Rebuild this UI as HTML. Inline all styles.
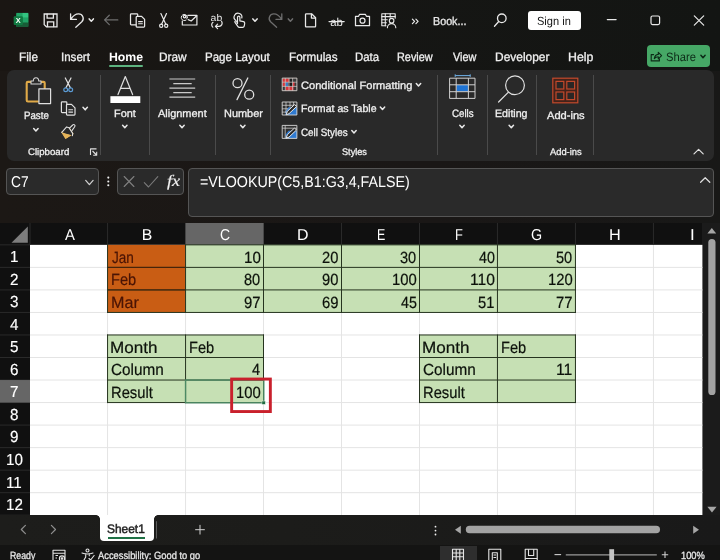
<!DOCTYPE html>
<html lang="en"><head><meta charset="utf-8"><title>Book1 - Excel</title>
<style>
html,body{margin:0;padding:0}
body{width:720px;height:560px;overflow:hidden;background:#151515;font-family:'Liberation Sans',sans-serif;position:relative}
#app{position:absolute;left:0;top:0;width:720px;height:560px;overflow:hidden;will-change:transform}
#app section{display:contents}
#app div{position:absolute;box-sizing:border-box}
#app span{position:absolute;white-space:pre;line-height:1;transform-origin:0 0;display:block;text-rendering:geometricPrecision}
#app svg{position:absolute;left:0;top:0;width:720px;height:560px;overflow:visible;text-rendering:geometricPrecision}
</style></head>
<body>
<div id="app">
<section class="titlebar">
<div style="left:0px;top:0px;width:720px;height:70.5px;background:#131513;background:linear-gradient(90deg,#1a1613 0%,#161614 45%,#131513 100%);"></div>
<div style="left:527.8px;top:11px;width:53.0px;height:18.8px;background:#fff;border-radius:3px;"></div>
<span style="left:433.14px;top:17px;font-size:11.5px;color:#e8e8e8;-webkit-text-stroke:0.3px;transform:scaleX(0.9346);">Book...</span>
<span style="left:537.25px;top:16px;font-size:11.8px;color:#111;transform:scaleX(0.9368);">Sign in</span>
</section>
<section class="ribbon-tabs">
<div style="left:109.3px;top:65.2px;width:33.7px;height:2.0px;background:#5db37f;border-radius:1px;"></div>
<div style="left:647px;top:45px;width:63px;height:22px;background:#46a866;border-radius:4px;"></div>
<span style="left:18.56px;top:51px;font-size:12.1px;color:#f0f0f0;-webkit-text-stroke:0.3px;transform:scaleX(0.9707);">File</span>
<span style="left:61.26px;top:51px;font-size:12.1px;color:#f0f0f0;-webkit-text-stroke:0.3px;transform:scaleX(0.9539);">Insert</span>
<span style="left:108.84px;top:51px;font-size:12.1px;color:#fff;font-weight:700;transform:scaleX(1.0153);">Home</span>
<span style="left:159.25px;top:51px;font-size:12.1px;color:#f0f0f0;-webkit-text-stroke:0.3px;transform:scaleX(0.9800);">Draw</span>
<span style="left:204.78px;top:51px;font-size:12.1px;color:#f0f0f0;-webkit-text-stroke:0.3px;transform:scaleX(0.9535);">Page Layout</span>
<span style="left:288.77px;top:51px;font-size:12.1px;color:#f0f0f0;-webkit-text-stroke:0.3px;transform:scaleX(0.9652);">Formulas</span>
<span style="left:355.09px;top:51px;font-size:12.1px;color:#f0f0f0;-webkit-text-stroke:0.3px;transform:scaleX(0.9445);">Data</span>
<span style="left:397.33px;top:51px;font-size:12.1px;color:#f0f0f0;-webkit-text-stroke:0.3px;transform:scaleX(0.8988);">Review</span>
<span style="left:452.59px;top:51px;font-size:12.1px;color:#f0f0f0;-webkit-text-stroke:0.3px;transform:scaleX(0.8998);">View</span>
<span style="left:495.24px;top:51px;font-size:12.1px;color:#f0f0f0;-webkit-text-stroke:0.3px;transform:scaleX(0.9877);">Developer</span>
<span style="left:567.71px;top:51px;font-size:12.1px;color:#f0f0f0;-webkit-text-stroke:0.3px;transform:scaleX(1.0191);">Help</span>
<span style="left:665.64px;top:51px;font-size:12.1px;color:#0c2a17;transform:scaleX(0.9261);">Share</span>
</section>
<section class="ribbon">
<div style="left:0px;top:70.5px;width:720px;height:152.5px;background:#1a1716;background:linear-gradient(90deg,#1c1815 0%,#1a1716 60%,#181817 100%);"></div>
<div style="left:6.6px;top:70.3px;width:707.2px;height:90.5px;background:#292929;border-radius:7px;"></div>
<div style="left:100.2px;top:74.5px;width:1.0px;height:80.5px;background:#4a4a4a;"></div>
<div style="left:148.5px;top:74.5px;width:1.0px;height:80.5px;background:#4a4a4a;"></div>
<div style="left:215.0px;top:74.5px;width:1.0px;height:80.5px;background:#4a4a4a;"></div>
<div style="left:270.0px;top:74.5px;width:1.0px;height:80.5px;background:#4a4a4a;"></div>
<div style="left:437.0px;top:74.5px;width:1.0px;height:80.5px;background:#4a4a4a;"></div>
<div style="left:487.0px;top:74.5px;width:1.0px;height:80.5px;background:#4a4a4a;"></div>
<div style="left:536.0px;top:74.5px;width:1.0px;height:80.5px;background:#4a4a4a;"></div>
<div style="left:593.0px;top:74.5px;width:1.0px;height:80.5px;background:#4a4a4a;"></div>
<span style="left:23.82px;top:111px;font-size:10.7px;color:#f0f0f0;-webkit-text-stroke:0.3px;transform:scaleX(0.9077);">Paste</span>
<span style="left:114.43px;top:109px;font-size:10.7px;color:#f0f0f0;-webkit-text-stroke:0.3px;transform:scaleX(1.0178);">Font</span>
<span style="left:158.30px;top:109px;font-size:10.7px;color:#f0f0f0;-webkit-text-stroke:0.3px;transform:scaleX(1.0251);">Alignment</span>
<span style="left:223.72px;top:109px;font-size:10.7px;color:#f0f0f0;-webkit-text-stroke:0.3px;transform:scaleX(1.0237);">Number</span>
<span style="left:451.71px;top:109px;font-size:10.7px;color:#f0f0f0;-webkit-text-stroke:0.3px;transform:scaleX(0.9084);">Cells</span>
<span style="left:495.15px;top:109px;font-size:10.7px;color:#f0f0f0;-webkit-text-stroke:0.3px;transform:scaleX(0.9956);">Editing</span>
<span style="left:546.70px;top:111px;font-size:10.7px;color:#f0f0f0;-webkit-text-stroke:0.3px;transform:scaleX(1.0378);">Add-ins</span>
<span style="left:300.75px;top:81px;font-size:10.7px;color:#f0f0f0;-webkit-text-stroke:0.3px;transform:scaleX(1.0360);">Conditional Formatting</span>
<span style="left:301.15px;top:104px;font-size:10.7px;color:#f0f0f0;-webkit-text-stroke:0.3px;transform:scaleX(0.9891);">Format as Table</span>
<span style="left:300.81px;top:128px;font-size:10.7px;color:#f0f0f0;-webkit-text-stroke:0.3px;transform:scaleX(0.9225);">Cell Styles</span>
<span style="left:27.62px;top:148px;font-size:9.6px;color:#f0f0f0;-webkit-text-stroke:0.3px;transform:scaleX(1.0042);">Clipboard</span>
<span style="left:341.54px;top:148px;font-size:9.6px;color:#f0f0f0;-webkit-text-stroke:0.3px;transform:scaleX(0.9549);">Styles</span>
<span style="left:549.70px;top:148px;font-size:9.6px;color:#f0f0f0;-webkit-text-stroke:0.3px;transform:scaleX(0.9733);">Add-ins</span>
</section>
<section class="formula-bar">
<div style="left:6.2px;top:168px;width:92.6px;height:26.5px;background:#2a2a2a;border:1px solid #555;border-radius:4px;"></div>
<div style="left:117px;top:168px;width:67px;height:26.5px;background:#2a2a2a;border:1px solid #555;border-radius:4px;"></div>
<div style="left:188.4px;top:168px;width:525.4px;height:48.6px;background:#2a2a2a;border:1px solid #555;border-radius:4px;"></div>
<span style="left:10.61px;top:175px;font-size:15.6px;color:#fff;transform:scaleX(0.8801);">C7</span>
<span style="left:199.89px;top:175px;font-size:15.6px;color:#fff;transform:scaleX(0.9147);">=VLOOKUP(C5,B1:G3,4,FALSE)</span>
<span style="left:166.62px;top:174px;font-size:16px;color:#f2f2f2;font-style:italic;font-family:'Liberation Serif',serif;-webkit-text-stroke:0.15px;transform:scaleX(1.1429);">fx</span>
</section>
<section class="grid">
<div style="left:0px;top:223px;width:720px;height:292.3px;background:#101010;"></div>
<div style="left:702.4px;top:223px;width:17.6px;height:292.3px;background:#1b1b1b;"></div>
<svg class="cells" viewBox="0 0 720 560" width="720" height="560" aria-hidden="true">
<rect x="30.00" y="244.85" width="672.40" height="270.45" fill="#fff"/>
<rect x="107.05" y="244.85" width="1.00" height="270.45" fill="#e4e4e4"/>
<rect x="185.05" y="244.85" width="1.00" height="270.45" fill="#e4e4e4"/>
<rect x="263.00" y="244.85" width="1.00" height="270.45" fill="#e4e4e4"/>
<rect x="341.00" y="244.85" width="1.00" height="270.45" fill="#e4e4e4"/>
<rect x="419.00" y="244.85" width="1.00" height="270.45" fill="#e4e4e4"/>
<rect x="496.95" y="244.85" width="1.00" height="270.45" fill="#e4e4e4"/>
<rect x="574.95" y="244.85" width="1.00" height="270.45" fill="#e4e4e4"/>
<rect x="652.95" y="244.85" width="1.00" height="270.45" fill="#e4e4e4"/>
<rect x="30.00" y="266.88" width="672.40" height="1.00" fill="#e4e4e4"/>
<rect x="30.00" y="289.41" width="672.40" height="1.00" fill="#e4e4e4"/>
<rect x="30.00" y="311.94" width="672.40" height="1.00" fill="#e4e4e4"/>
<rect x="30.00" y="334.47" width="672.40" height="1.00" fill="#e4e4e4"/>
<rect x="30.00" y="357.00" width="672.40" height="1.00" fill="#e4e4e4"/>
<rect x="30.00" y="379.53" width="672.40" height="1.00" fill="#e4e4e4"/>
<rect x="30.00" y="402.06" width="672.40" height="1.00" fill="#e4e4e4"/>
<rect x="30.00" y="424.59" width="672.40" height="1.00" fill="#e4e4e4"/>
<rect x="30.00" y="447.12" width="672.40" height="1.00" fill="#e4e4e4"/>
<rect x="30.00" y="469.65" width="672.40" height="1.00" fill="#e4e4e4"/>
<rect x="30.00" y="492.18" width="672.40" height="1.00" fill="#e4e4e4"/>
<rect x="29.50" y="223.00" width="1.00" height="21.85" fill="#2a2a2a"/>
<rect x="107.05" y="223.00" width="1.00" height="21.85" fill="#2a2a2a"/>
<rect x="185.05" y="223.00" width="1.00" height="21.85" fill="#2a2a2a"/>
<rect x="263.00" y="223.00" width="1.00" height="21.85" fill="#2a2a2a"/>
<rect x="341.00" y="223.00" width="1.00" height="21.85" fill="#2a2a2a"/>
<rect x="419.00" y="223.00" width="1.00" height="21.85" fill="#2a2a2a"/>
<rect x="496.95" y="223.00" width="1.00" height="21.85" fill="#2a2a2a"/>
<rect x="574.95" y="223.00" width="1.00" height="21.85" fill="#2a2a2a"/>
<rect x="652.95" y="223.00" width="1.00" height="21.85" fill="#2a2a2a"/>
<rect x="0.00" y="244.35" width="30.00" height="1.00" fill="#2a2a2a"/>
<rect x="0.00" y="266.88" width="30.00" height="1.00" fill="#2a2a2a"/>
<rect x="0.00" y="289.41" width="30.00" height="1.00" fill="#2a2a2a"/>
<rect x="0.00" y="311.94" width="30.00" height="1.00" fill="#2a2a2a"/>
<rect x="0.00" y="334.47" width="30.00" height="1.00" fill="#2a2a2a"/>
<rect x="0.00" y="357.00" width="30.00" height="1.00" fill="#2a2a2a"/>
<rect x="0.00" y="379.53" width="30.00" height="1.00" fill="#2a2a2a"/>
<rect x="0.00" y="402.06" width="30.00" height="1.00" fill="#2a2a2a"/>
<rect x="0.00" y="424.59" width="30.00" height="1.00" fill="#2a2a2a"/>
<rect x="0.00" y="447.12" width="30.00" height="1.00" fill="#2a2a2a"/>
<rect x="0.00" y="469.65" width="30.00" height="1.00" fill="#2a2a2a"/>
<rect x="0.00" y="492.18" width="30.00" height="1.00" fill="#2a2a2a"/>
<rect x="0.00" y="514.71" width="30.00" height="1.00" fill="#2a2a2a"/>
<rect x="185.55" y="223.00" width="77.95" height="21.85" fill="#666"/>
<rect x="0.00" y="380.03" width="30.00" height="22.53" fill="#666"/>
<rect x="107.55" y="244.85" width="78.00" height="67.59" fill="#c95d14"/>
<rect x="185.55" y="244.85" width="389.90" height="67.59" fill="#c6e0b4"/>
<rect x="107.55" y="334.97" width="155.95" height="67.59" fill="#c6e0b4"/>
<rect x="419.50" y="334.97" width="155.95" height="67.59" fill="#c6e0b4"/>
<rect x="107.05" y="266.88" width="468.90" height="1.00" fill="#26341f"/>
<rect x="107.05" y="289.41" width="468.90" height="1.00" fill="#26341f"/>
<rect x="107.05" y="311.94" width="468.90" height="1.00" fill="#26341f"/>
<rect x="185.05" y="244.35" width="390.90" height="1.00" fill="#26341f"/>
<rect x="108.05" y="266.88" width="77.00" height="1.00" fill="#4a2208"/>
<rect x="108.05" y="289.41" width="77.00" height="1.00" fill="#4a2208"/>
<rect x="107.05" y="244.35" width="1.00" height="68.59" fill="#26341f"/>
<rect x="185.05" y="244.35" width="1.00" height="68.59" fill="#26341f"/>
<rect x="263.00" y="244.35" width="1.00" height="68.59" fill="#26341f"/>
<rect x="341.00" y="244.35" width="1.00" height="68.59" fill="#26341f"/>
<rect x="419.00" y="244.35" width="1.00" height="68.59" fill="#26341f"/>
<rect x="496.95" y="244.35" width="1.00" height="68.59" fill="#26341f"/>
<rect x="574.95" y="244.35" width="1.00" height="68.59" fill="#26341f"/>
<rect x="107.05" y="334.47" width="156.95" height="1.00" fill="#26341f"/>
<rect x="419.00" y="334.47" width="156.95" height="1.00" fill="#26341f"/>
<rect x="107.05" y="357.00" width="156.95" height="1.00" fill="#26341f"/>
<rect x="419.00" y="357.00" width="156.95" height="1.00" fill="#26341f"/>
<rect x="107.05" y="379.53" width="156.95" height="1.00" fill="#26341f"/>
<rect x="419.00" y="379.53" width="156.95" height="1.00" fill="#26341f"/>
<rect x="107.05" y="402.06" width="156.95" height="1.00" fill="#26341f"/>
<rect x="419.00" y="402.06" width="156.95" height="1.00" fill="#26341f"/>
<rect x="107.05" y="334.47" width="1.00" height="68.59" fill="#26341f"/>
<rect x="185.05" y="334.47" width="1.00" height="68.59" fill="#26341f"/>
<rect x="263.00" y="334.47" width="1.00" height="68.59" fill="#26341f"/>
<rect x="419.00" y="334.47" width="1.00" height="68.59" fill="#26341f"/>
<rect x="496.95" y="334.47" width="1.00" height="68.59" fill="#26341f"/>
<rect x="574.95" y="334.47" width="1.00" height="68.59" fill="#26341f"/>
<rect x="185.55" y="380.03" width="78.25" height="22.73" fill="none" stroke="#4d8a64" stroke-width="1.400"/>
<rect x="261.90" y="401.06" width="3.400" height="3.300" fill="#1f6b41" stroke="#e8f1e4" stroke-width=".5"/>
<rect x="231.650" y="379.050" width="38.700" height="32.500" fill="none" stroke="#c9202c" stroke-width="2.900"/>
</svg>
<span style="left:64.60px;top:228px;font-size:15.8px;color:#fff;transform:scaleX(0.9398);">A</span>
<span style="left:141.83px;top:228px;font-size:15.8px;color:#fff;">B</span>
<span style="left:220.10px;top:228px;font-size:15.8px;color:#fff;transform:scaleX(0.8841);">C</span>
<span style="left:297.03px;top:228px;font-size:15.8px;color:#fff;transform:scaleX(1.0084);">D</span>
<span style="left:376.51px;top:228px;font-size:15.8px;color:#fff;transform:scaleX(0.7853);">E</span>
<span style="left:454.57px;top:228px;font-size:15.8px;color:#fff;transform:scaleX(0.8137);">F</span>
<span style="left:530.98px;top:228px;font-size:15.8px;color:#fff;transform:scaleX(0.9056);">G</span>
<span style="left:608.90px;top:228px;font-size:15.8px;color:#fff;transform:scaleX(1.0285);">H</span>
<span style="left:689.87px;top:228px;font-size:15.8px;color:#fff;transform:scaleX(1.0759);">I</span>
<span style="left:10.12px;top:250px;font-size:16px;color:#fff;-webkit-text-stroke:0.15px;transform:scaleX(0.9500);">1</span>
<span style="left:10.34px;top:273px;font-size:16px;color:#fff;-webkit-text-stroke:0.15px;transform:scaleX(0.9500);">2</span>
<span style="left:10.42px;top:295px;font-size:16px;color:#fff;-webkit-text-stroke:0.15px;transform:scaleX(0.9500);">3</span>
<span style="left:10.42px;top:318px;font-size:16px;color:#fff;-webkit-text-stroke:0.15px;transform:scaleX(0.9500);">4</span>
<span style="left:10.42px;top:340px;font-size:16px;color:#fff;-webkit-text-stroke:0.15px;transform:scaleX(0.9500);">5</span>
<span style="left:10.34px;top:363px;font-size:16px;color:#fff;-webkit-text-stroke:0.15px;transform:scaleX(0.9500);">6</span>
<span style="left:10.34px;top:385px;font-size:16px;color:#fff;-webkit-text-stroke:0.15px;transform:scaleX(0.9500);">7</span>
<span style="left:10.42px;top:408px;font-size:16px;color:#fff;-webkit-text-stroke:0.15px;transform:scaleX(0.9500);">8</span>
<span style="left:10.34px;top:430px;font-size:16px;color:#fff;-webkit-text-stroke:0.15px;transform:scaleX(0.9500);">9</span>
<span style="left:5.86px;top:453px;font-size:16px;color:#fff;-webkit-text-stroke:0.15px;transform:scaleX(0.9500);">10</span>
<span style="left:6.47px;top:476px;font-size:16px;color:#fff;-webkit-text-stroke:0.15px;transform:scaleX(0.9500);">11</span>
<span style="left:5.94px;top:498px;font-size:16px;color:#fff;-webkit-text-stroke:0.15px;transform:scaleX(0.9500);">12</span>
<span style="left:111.58px;top:250px;font-size:16.2px;color:#4a1405;-webkit-text-stroke:0.2px;transform:scaleX(0.8392);">Jan</span>
<span style="left:110.68px;top:272px;font-size:16.2px;color:#4a1405;-webkit-text-stroke:0.2px;transform:scaleX(0.9028);">Feb</span>
<span style="left:110.56px;top:295px;font-size:16.2px;color:#4a1405;-webkit-text-stroke:0.2px;transform:scaleX(0.9960);">Mar</span>
<span style="left:243.79px;top:250px;font-size:16.2px;color:#0d120b;-webkit-text-stroke:0.2px;transform:scaleX(0.9353);">10</span>
<span style="left:322.26px;top:250px;font-size:16.2px;color:#0d120b;-webkit-text-stroke:0.2px;transform:scaleX(0.9078);">20</span>
<span style="left:400.42px;top:250px;font-size:16.2px;color:#0d120b;-webkit-text-stroke:0.2px;transform:scaleX(0.8990);">30</span>
<span style="left:478.66px;top:250px;font-size:16.2px;color:#0d120b;-webkit-text-stroke:0.2px;transform:scaleX(0.8818);">40</span>
<span style="left:556.37px;top:250px;font-size:16.2px;color:#0d120b;-webkit-text-stroke:0.2px;transform:scaleX(0.8990);">50</span>
<span style="left:244.42px;top:272px;font-size:16.2px;color:#0d120b;-webkit-text-stroke:0.2px;transform:scaleX(0.8990);">80</span>
<span style="left:322.26px;top:272px;font-size:16.2px;color:#0d120b;-webkit-text-stroke:0.2px;transform:scaleX(0.9078);">90</span>
<span style="left:391.81px;top:272px;font-size:16.2px;color:#0d120b;-webkit-text-stroke:0.2px;transform:scaleX(0.9160);">100</span>
<span style="left:469.70px;top:272px;font-size:16.2px;color:#0d120b;-webkit-text-stroke:0.2px;transform:scaleX(0.9658);">110</span>
<span style="left:547.76px;top:272px;font-size:16.2px;color:#0d120b;-webkit-text-stroke:0.2px;transform:scaleX(0.9160);">120</span>
<span style="left:244.26px;top:295px;font-size:16.2px;color:#0d120b;-webkit-text-stroke:0.2px;transform:scaleX(0.9168);">97</span>
<span style="left:322.26px;top:295px;font-size:16.2px;color:#0d120b;-webkit-text-stroke:0.2px;transform:scaleX(0.9168);">69</span>
<span style="left:400.71px;top:295px;font-size:16.2px;color:#0d120b;-webkit-text-stroke:0.2px;transform:scaleX(0.8818);">45</span>
<span style="left:478.36px;top:295px;font-size:16.2px;color:#0d120b;-webkit-text-stroke:0.2px;transform:scaleX(0.9078);">51</span>
<span style="left:556.21px;top:295px;font-size:16.2px;color:#0d120b;-webkit-text-stroke:0.2px;transform:scaleX(0.9168);">77</span>
<span style="left:110.48px;top:340px;font-size:16.2px;color:#0d120b;-webkit-text-stroke:0.2px;transform:scaleX(1.0562);">Month</span>
<span style="left:111.08px;top:362px;font-size:16.2px;color:#0d120b;-webkit-text-stroke:0.2px;transform:scaleX(0.9472);">Column</span>
<span style="left:110.67px;top:385px;font-size:16.2px;color:#0d120b;-webkit-text-stroke:0.2px;transform:scaleX(0.9113);">Result</span>
<span style="left:188.68px;top:340px;font-size:16.2px;color:#0d120b;-webkit-text-stroke:0.2px;transform:scaleX(0.9028);">Feb</span>
<span style="left:252.31px;top:362px;font-size:16.2px;color:#0d120b;-webkit-text-stroke:0.2px;transform:scaleX(0.8957);">4</span>
<span style="left:235.81px;top:385px;font-size:16.2px;color:#0d120b;-webkit-text-stroke:0.2px;transform:scaleX(0.9160);">100</span>
<span style="left:422.43px;top:340px;font-size:16.2px;color:#0d120b;-webkit-text-stroke:0.2px;transform:scaleX(1.0562);">Month</span>
<span style="left:423.03px;top:362px;font-size:16.2px;color:#0d120b;-webkit-text-stroke:0.2px;transform:scaleX(0.9472);">Column</span>
<span style="left:422.62px;top:385px;font-size:16.2px;color:#0d120b;-webkit-text-stroke:0.2px;transform:scaleX(0.9113);">Result</span>
<span style="left:500.58px;top:340px;font-size:16.2px;color:#0d120b;-webkit-text-stroke:0.2px;transform:scaleX(0.9028);">Feb</span>
<span style="left:556.28px;top:362px;font-size:16.2px;color:#0d120b;-webkit-text-stroke:0.2px;transform:scaleX(0.9768);">11</span>
</section>
<section class="sheet-tabs">
<div style="left:0px;top:515.3px;width:720px;height:30.1px;background:#1c1c1a;background:linear-gradient(90deg,#1d1d1b 0%,#1c1c1a 40%,#191919 100%);"></div>
<div style="left:0px;top:544.5px;width:720px;height:1.0px;background:#262625;"></div>
<div style="left:100px;top:515.3px;width:53.5px;height:25.5px;background:#fff;border-radius:0 0 4px 4px;"></div>
<div style="left:96px;top:515.3px;width:4px;height:4.0px;background:transparent;background:radial-gradient(circle at 0 100%,#1c1c1a 3.5px,#fff 4.2px);"></div>
<div style="left:153.5px;top:515.3px;width:4.0px;height:4.0px;background:transparent;background:radial-gradient(circle at 100% 100%,#1c1c1a 3.5px,#fff 4.2px);"></div>
<div style="left:107.8px;top:537px;width:37.0px;height:1.6px;background:#1f7145;"></div>
<span style="left:107.40px;top:523px;font-size:12.3px;color:#1e1e1e;-webkit-text-stroke:0.45px;transform:scaleX(0.9693);">Sheet1</span>
</section>
<section class="status-bar">
<div style="left:0px;top:545.4px;width:720px;height:14.6px;background:#141413;"></div>
<div style="left:440px;top:545.5px;width:36.7px;height:14.5px;background:#2e2e2e;"></div>
<span style="left:10.00px;top:551px;font-size:10.5px;color:#e8e8e8;-webkit-text-stroke:0.3px;transform:scaleX(0.8338);">Ready</span>
<span style="left:98.20px;top:551px;font-size:10.5px;color:#e8e8e8;-webkit-text-stroke:0.3px;transform:scaleX(0.8887);">Accessibility: Good to go</span>
<span style="left:680.76px;top:551px;font-size:10.5px;color:#e8e8e8;-webkit-text-stroke:0.3px;transform:scaleX(0.8860);">100%</span>
</section>
<svg class="icons" viewBox="0 0 720 560" width="720" height="560" fill="none" stroke-linecap="round" stroke-linejoin="round" aria-hidden="true">
<g stroke="none"><rect x="16.400" y="12.900" width="11.900" height="14.200" rx="1.200" fill="#1e9e60"/><rect x="22.300" y="12.900" width="6" height="4.800" fill="#33c481"/><rect x="16.400" y="12.900" width="5.900" height="4.800" fill="#21a366"/><rect x="16.400" y="17.700" width="5.900" height="4.700" fill="#107c41"/><rect x="22.300" y="17.700" width="6" height="4.700" fill="#21a366"/><rect x="16.400" y="22.400" width="11.900" height="4.700" rx="1.200" fill="#185c37"/><rect x="13.700" y="16.200" width="9.200" height="8.900" rx="1" fill="#117a42"/><text x="18.300" y="23.300" font-family="Liberation Sans,sans-serif" font-size="7.400" font-weight="700" fill="#fff" text-anchor="middle">X</text></g>
<g stroke="#e9e9e9" stroke-width="1.300" stroke-linejoin="miter"><path d="M44.200 14h12.800v12.800h-10.600l-2.200-2.200z"/><path d="M47.100 14.200v3.900h6.300v-3.900"/><path d="M47.500 26.600v-4.700h6.200v4.700"/></g>
<path d="M70.6 13.8v5.6h5.8M70.9 19.2c2.2-3.6 5-5.4 7.6-5.4a4.6 4.6 0 0 1 3.3 7.9l-6 5.5" stroke="#e9e9e9" stroke-width="1.3"/>
<path d="M89.19 18.90L91.30 21.30L93.41 18.90" stroke="#e9e9e9" stroke-width="1.4949999999999999"/>
<path d="M104.6 19.9h13.2M109.3 15.3l-4.7 4.6 4.7 4.7" stroke="#6e6e6e" stroke-width="1.3"/>
<g stroke="#e9e9e9" stroke-width="1.25"><path d="M135.8 24.8h-4.5a.8.8 0 0 1-.8-.8v-9.4a.8.8 0 0 1 .8-.8h5.6a.8.8 0 0 1 .8.8v1.6"/><path d="M136.2 17.2a.8.8 0 0 1 .8-.8h4.6l3 3v6.8a.8.8 0 0 1-.8.8h-6.8a.8.8 0 0 1-.8-.8z"/><path d="M138.6 21.6h3.8M138.6 23.8h3.8" stroke-width="1.1"/></g>
<g stroke="#e9e9e9" stroke-width="1.2"><path d="M160.9 13.6l4.9 10.6M166.5 13.6l-4.9 10.6"/><circle cx="161.2" cy="25.7" r="1.6"/><circle cx="166.2" cy="25.7" r="1.6"/></g>
<g stroke="#e9e9e9" stroke-width="1.2"><path d="M187.8 15.3h9.1v9.7h-14.6v-4"/><path d="M188.2 19.6l3 1.4 5.5-5.2"/><circle cx="184.6" cy="16.6" r="1.3"/><path d="M185.9 15.4v2.2a1 1 0 0 0 1.5.5 3.1 3.1 0 1 0-1.3 2" stroke-width="1"/></g>
<g fill="#e9e9e9" stroke="none"><text x="210.6" y="20.6" font-family="Liberation Sans,sans-serif" font-size="9.6" textLength="11.6" lengthAdjust="spacingAndGlyphs">ab</text></g><g stroke="#e9e9e9" stroke-width="1.2"><path d="M213 22.3a3 3 0 0 0-.2 4.8M221.6 21.4a3.2 3.2 0 0 1-2.5 5h-3.4M217.6 24.2l-2.2 2.2 2.2 2.2"/></g>
<g stroke="#e9e9e9" stroke-width="1.2"><path d="M235.6 20.2a3.9 3.9 0 1 1 6.2-2.2"/><path d="M237.5 23.6v-6.3a1.2 1.2 0 0 1 2.4 0v3.6l3.6.8a1.6 1.6 0 0 1 1.2 1.8l-.5 2.6a1.6 1.6 0 0 1-1.6 1.3h-3.3a1.6 1.6 0 0 1-1.3-.7l-3-4.300a1 1 0 0 1 1.500-1.300z"/></g>
<path d="M252.89 18.90L255.00 21.30L257.11 18.90" stroke="#e9e9e9" stroke-width="1.4949999999999999"/>
<path d="M281.8 13.8v5.600h-5.800M281.5 19.200c-2.200-3.600-5-5.400-7.600-5.400a4.600 4.600 0 0 0-3.300 7.900l6 5.500" stroke="#6e6e6e" stroke-width="1.3"/>
<path d="M288.29 18.90L290.40 21.30L292.51 18.90" stroke="#6e6e6e" stroke-width="1.4949999999999999"/>
<g stroke="#e9e9e9" stroke-width="1.25"><path d="M305.5 14.6a.8.8 0 0 1 .8-.8h5.300l4 4v8.400a.8.8 0 0 1-.8.800h-8.500a.8.8 0 0 1-.8-.800z"/><path d="M311.400 14v4h4"/></g>
<g fill="#e9e9e9" stroke="none"><text x="330.300" y="25.600" font-family="Liberation Sans,sans-serif" font-size="11.5" textLength="12.600" lengthAdjust="spacingAndGlyphs">ab</text></g><path d="M329 21.6h15.200" stroke="#e9e9e9" stroke-width="1.1"/>
<g stroke="#e9e9e9" stroke-width="1.25"><path d="M355.500 16.300h3l1.200-2h5.600l1.200 2h3v9.400h-14z"/><circle cx="362.500" cy="20.700" r="2.500"/></g>
<g stroke="#e9e9e9" stroke-width="1.1"><path d="M386 25.800h-4.200v-12h13.400v4.500"/><path d="M381.800 16.600h13.400M381.800 19.700h5.500M381.800 22.800h4.600M385.300 13.800v12M390.200 13.800v3.500"/><circle cx="391.600" cy="20.700" r="2.300"/><path d="M387.400 27.800a4.200 4.200 0 0 1 8.400 0"/></g>
<path d="M412.400 19.200l2.200 2.200-2.200 2.200M415.900 19.200l2.200 2.200-2.200 2.200" stroke="#e9e9e9" stroke-width="1.2"/>
<g stroke="#e9e9e9" stroke-width="1.3"><circle cx="501.800" cy="18.300" r="4.300"/><path d="M498.700 21.500l-4.200 4.700"/></g>
<path d="M607.300 19.600h8.800" stroke="#e9e9e9" stroke-width="1.200"/>
<rect x="651" y="16" width="8.600" height="8.600" rx="1.500" stroke="#e9e9e9" stroke-width="1.200"/>
<path d="M694.300 15.800l9.400 9.400M703.700 15.800l-9.400 9.400" stroke="#e9e9e9" stroke-width="1.200"/>
<g stroke-width="2.100" stroke="#e0aa48"><path d="M31 81.900h-3.100a1.200 1.200 0 0 0-1.200 1.200v17.200a1.200 1.200 0 0 0 1.200 1.200h10M40.600 81.900h2.900a1.200 1.200 0 0 1 1.200 1.200v5.200"/></g><path d="M31 84v-3h2.300a2.700 3.300 0 0 1 5.400 0h2.300v3z" stroke="#d4d4d4" stroke-width="1.100" fill="#292929"/><rect x="38.900" y="88.900" width="11.700" height="14.700" stroke="#e0e0e0" stroke-width="1.200" fill="#292929"/>
<path d="M33.70 128.55L35.90 131.05L38.10 128.55" stroke="#e9e9e9" stroke-width="1.4949999999999999"/>
<g stroke-width="1.200"><path d="M65.300 78l5 9.600M71 78l-5 9.600" stroke="#e0e0e0"/><circle cx="65.700" cy="89.700" r="1.900" stroke="#5b9bd5"/><circle cx="70.700" cy="89.700" r="1.900" stroke="#5b9bd5"/></g>
<g stroke="#e0e0e0" stroke-width="1.200"><path d="M66 112.600h-3.800a.8.800 0 0 1-.8-.8v-9.200a.8.800 0 0 1 .8-.8h3.800a.8.800 0 0 1 .8.800v2"/><path d="M66.500 105.200a.8.800 0 0 1 .8-.8h4.200l3.500 3.500v6.400a.8.800 0 0 1-.8.800h-6.900a.8.800 0 0 1-.8-.8z"/><path d="M68.800 109.800h3.800M68.800 112.100h3.800" stroke-width="1.100"/></g>
<path d="M83.00 107.35L85.20 109.85L87.40 107.35" stroke="#e9e9e9" stroke-width="1.4949999999999999"/>
<g stroke-width="1.100"><path d="M61.800 132.300l7.200-4.600 4 6.100-7.300 4.600z" fill="#e5b45a" stroke="#e5b45a"/><path d="M61.800 132.300l4.800-5.400 2.400.8 3.700 5.700-.3 2.400" stroke="#e0e0e0" fill="#292929"/><path d="M69.500 128.200l3.200-3.200a1.300 1.300 0 0 1 2 1.700l-2.600 3.700" stroke="#e0e0e0"/><path d="M63 133.600l8.200 1.500-5.500 3.300z" fill="#e5b45a" stroke="none"/></g>
<g stroke="#e0e0e0" stroke-width="1.100" stroke-linecap="butt"><path d="M96.500 148.900h-6v6M92.500 151l4 4M96.700 151.700v3.500h-3.500"/></g>
<path d="M118 94.600l7.300-18 7.300 18M120.800 88.300h9" stroke="#e0e0e0" stroke-width="1.200"/>
<rect x="110.400" y="96.200" width="29.900" height="6.800" fill="#fff" stroke="none"/>
<path d="M122.60 125.25L124.80 127.75L127.00 125.25" stroke="#e9e9e9" stroke-width="1.4949999999999999"/>
<g stroke="#c9c9c9" stroke-width="1.200" stroke-linecap="butt"><path d="M169.400 79h25.800M173.300 83.600h18.400M169.400 88.100h25.800M173.300 92.600h18.400M169.400 97.100h25.800"/></g>
<path d="M179.80 125.25L182.00 127.75L184.20 125.25" stroke="#e9e9e9" stroke-width="1.4949999999999999"/>
<g stroke="#e0e0e0" stroke-width="1.300"><circle cx="237.500" cy="83.200" r="4.500"/><circle cx="249.200" cy="94.700" r="4.500"/><path d="M247.800 78l-10.800 21.600"/></g>
<path d="M240.60 125.25L242.80 127.75L245.00 125.25" stroke="#e9e9e9" stroke-width="1.4949999999999999"/>
<g stroke="none"><rect x="282" y="78" width="15" height="12.700" fill="#3a3a3a"/><rect x="282.500" y="78.500" width="7" height="3.500" fill="#d8363a"/><rect x="285.500" y="86.500" width="8" height="4" fill="#d8363a"/><rect x="292.500" y="82" width="2" height="4.300" fill="#d8363a"/><rect x="285.500" y="82.300" width="2.500" height="4" fill="#3b78c4"/><rect x="282.500" y="82.300" width="2.500" height="4" fill="#d8363a"/><rect x="289.500" y="78.500" width="3" height="3.500" fill="#222"/><rect x="289" y="82.300" width="3.400" height="4" fill="#1a1a1a"/></g><g stroke="#d6d0cc" stroke-width=".9" stroke-linecap="butt"><rect x="282.200" y="78.100" width="14.700" height="12.600"/><path d="M282.200 82.200h14.700M282.200 86.400h14.700M285.300 78.100v12.600M289 78.100v12.600M292.600 78.100v12.600" stroke-opacity=".75"/></g>
<g stroke="none"><rect x="282" y="101.8" width="15" height="13.300" fill="#303030"/><path d="M288.500 107.3h8.500v7.800h-11.500v-3.800z" fill="#2f7ad0"/></g><g stroke="#d6d6d6" stroke-width=".9" stroke-linecap="butt"><rect x="282.200" y="102.0" width="14.700" height="13"/><path d="M282.200 105.3h14.700M282.200 108.8h6M282.200 112.1h4M286 102.0v11M290 102.0v5.500M293.600 102.0v3.400" stroke-opacity=".8"/></g><path d="M286.300 114.39999999999999l1-3 7.200-6.800 2 2-7.200 6.800z" stroke="#e8e8e8" stroke-width="1" fill="#2a2a2a"/>
<g stroke="none"><rect x="282" y="125.2" width="15" height="13.300" fill="#303030"/><path d="M288.500 130.7h8.500v7.800h-11.500v-3.800z" fill="#2f7ad0"/></g><g stroke="#d6d6d6" stroke-width=".9" stroke-linecap="butt"><rect x="282.200" y="125.4" width="14.700" height="13"/><path d="M282.200 128.2h14.700M285.200 125.4v13" stroke-opacity=".8"/></g><path d="M286.300 137.8l1-3 7.200-6.800 2 2-7.200 6.800z" stroke="#e8e8e8" stroke-width="1" fill="#2a2a2a"/>
<path d="M416.30 83.55L418.50 86.05L420.70 83.55" stroke="#e9e9e9" stroke-width="1.4949999999999999"/>
<path d="M380.30 106.95L382.50 109.45L384.70 106.95" stroke="#e9e9e9" stroke-width="1.4949999999999999"/>
<path d="M351.80 130.55L354.00 133.05L356.20 130.55" stroke="#e9e9e9" stroke-width="1.4949999999999999"/>
<g stroke="none"><rect x="456.400" y="85" width="11.800" height="6.500" fill="#1f74d4"/></g><g stroke="#d0d0d0" stroke-width="1" stroke-linecap="butt"><rect x="449.600" y="78.200" width="25.400" height="20.200"/><path d="M449.600 84.800h25.400M449.600 91.700h25.400M456.200 78.200v20.200M468.400 78.200v20.200"/></g><path d="M455.200 75.600h15M455.200 74.300v2.600M470.200 74.300v2.600" stroke="#6fb0e6" stroke-width="1" stroke-linecap="butt"/>
<path d="M459.80 125.25L462.00 127.75L464.20 125.25" stroke="#e9e9e9" stroke-width="1.4949999999999999"/>
<g stroke="#e0e0e0" stroke-width="1.200"><circle cx="515" cy="85.300" r="9.400"/><path d="M508.200 92.300l-9.600 9.700"/></g>
<path d="M509.10 125.25L511.30 127.75L513.50 125.25" stroke="#e9e9e9" stroke-width="1.4949999999999999"/>
<g stroke="#c2492c" stroke-width="1.200" stroke-linecap="butt" stroke-linejoin="miter"><rect x="552.800" y="78.200" width="25" height="24.600" fill="#43221a"/><g fill="#2a2625"><rect x="556" y="81.400" width="7.800" height="7.600"/><rect x="566.800" y="81.400" width="7.800" height="7.600"/><rect x="556" y="92" width="7.800" height="7.600"/><rect x="566.800" y="92" width="7.800" height="7.600"/></g></g>
<path d="M694.00 153.85L698.60 149.35L703.20 153.85" stroke="#e0e0e0" stroke-width="1.2"/>
<g stroke="#0c2a17" stroke-width="1.100"><path d="M653.600 54.600h-2.400v6.300h8.200v-2"/><path d="M654.300 58.600c.4-2.600 1.900-4 4-4.200v-2.100l3.300 3.300-3.300 3.300v-2.100c-1.800 0-3 .5-4 1.800z"/></g>
<path d="M700.89 55.25L703.00 57.75L705.11 55.25" stroke="#0c2a17" stroke-width="1.4949999999999999"/>
<path d="M85.70 180.44L89.40 184.56L93.10 180.44" stroke="#d0d0d0" stroke-width="1.265"/>
<g fill="#f0f0f0" stroke="none"><circle cx="108.300" cy="177.600" r="1.050"/><circle cx="108.300" cy="181.500" r="1.050"/><circle cx="108.300" cy="185.300" r="1.050"/></g>
<path d="M124.200 176.500l9.700 10M133.900 176.500l-9.700 10" stroke="#808080" stroke-width="1.100"/>
<path d="M144.300 182.600l4.200 4.400 9.300-10.300" stroke="#7a7a7a" stroke-width="1.100"/>
<path d="M700.60 182.25L705.20 177.75L709.80 182.25" stroke="#e0e0e0" stroke-width="1.2"/>
<path d="M27.800 226.500v16.300h-16.300z" fill="#7d7d7d" stroke="none"/>
<path d="M707.400 233.600l4.400-5.600 4.400 5.600z" fill="#a6a6a6" stroke="none"/>
<rect x="708.300" y="239" width="7.200" height="156" rx="3.600" fill="#a3a3a3" stroke="none"/>
<path d="M707.400 506.800l4.600 5.800 4.600-5.800z" fill="#a6a6a6" stroke="none"/>
<path d="M25.400 525.400l-4.100 4.100 4.100 4.100M51.400 525.400l4.100 4.100-4.100 4.100" stroke="#8e8e8e" stroke-width="1.200"/>
<path d="M156.500 521.200v17.300" stroke="#5c5c5c" stroke-width="1" stroke-linecap="butt"/>
<path d="M195.200 529.700h9.600M200 524.900v9.600" stroke="#d0d0d0" stroke-width="1" stroke-linecap="butt"/>
<g fill="#f0f0f0" stroke="none"><circle cx="435.500" cy="526.700" r=".9"/><circle cx="435.500" cy="530.600" r=".9"/><circle cx="435.500" cy="534.500" r=".9"/></g>
<path d="M460.800 525.700v8l-5.800-4z" fill="#a6a6a6" stroke="none"/>
<rect x="465.800" y="525.800" width="194.200" height="7.500" rx="3.750" fill="#a3a3a3" stroke="none"/>
<path d="M693.200 525.700v8l5.800-4z" fill="#a6a6a6" stroke="none"/>
<g stroke="#e6e6e6" stroke-width="1.100" stroke-linecap="butt"><path d="M53 560v-9.700h12v9.700M53 553.200h12M55.500 555.500h2.500M55.500 558h1.500"/><circle cx="62" cy="558.500" r="2.600" fill="#1c1c1c"/><circle cx="62" cy="558.500" r=".8" fill="#e6e6e6"/></g>
<g stroke="#e6e6e6" stroke-width="1.100"><circle cx="87.500" cy="550.500" r="1.500"/><path d="M82 553c3.500 1.200 7.500 1.200 11 0M85.700 553.800v3.200l-1.700 3M89.300 553.800v2"/><path d="M89 558.500l1.600 1.500 3.500-4.500"/></g>
<g stroke="#e6e6e6" stroke-width="1.100" stroke-linecap="butt"><path d="M452.500 560v-10.700h11v10.700M452.500 553h11M452.500 556.700h11M456.200 549.300v10.700M459.800 549.300v10.700"/><path d="M488.800 560v-10.700h12v10.700"/><path d="M492.300 560v-7.200h5v7.200M493.500 555h2.600M493.500 557.500h2.600"/><path d="M525.200 560v-10.700h12v10.700"/><path d="M528.500 549.300v6.200h5.200v-6.200M525.200 558.500h12" /></g>
<path d="M554.500 554.600h6.600" stroke="#cfcfcf" stroke-width="1.100" stroke-linecap="butt"/>
<path d="M565.800 554.800h91" stroke="#9a9a9a" stroke-width="1.300" stroke-linecap="butt"/>
<rect x="609.300" y="549.200" width="4.800" height="11" fill="#c4c4c4" stroke="none"/>
<path d="M661.800 554.700h6.400M665 551.500v6.400" stroke="#cfcfcf" stroke-width="1.100" stroke-linecap="butt"/>
</svg>
</div>
</body></html>
